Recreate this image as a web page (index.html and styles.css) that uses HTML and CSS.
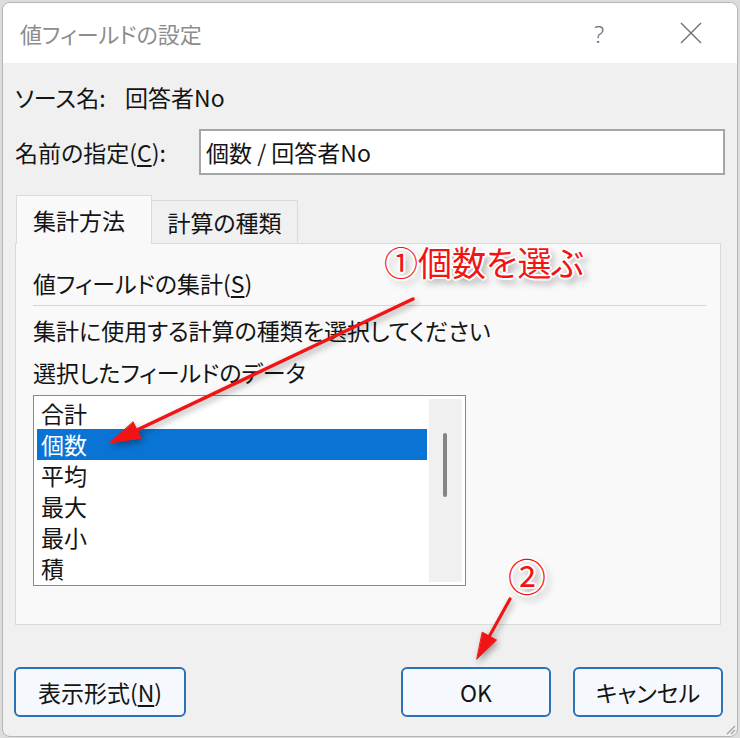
FILE: index.html
```html
<!DOCTYPE html>
<html lang="ja">
<head>
<meta charset="utf-8">
<title>値フィールドの設定</title>
<link rel="stylesheet" href="styles.css">
</head>
<body>
<div class="dialog">
  <div class="titlebar">
    <span class="title">値フィールドの設定</span>
    <span class="help">?</span>
    <span class="close"><svg width="22" height="22" viewBox="0 0 22 22"><path d="M1 1L21 21M21 1L1 21" stroke="#6f6f6f" stroke-width="1.4" fill="none"/></svg></span>
  </div>
  <div class="body">
    <div class="row source"><span class="lbl lbl-src">ソース名:</span><span>回答者No</span></div>
    <div class="row name"><span class="lbl lbl-name">名前の指定(<u>C</u>):</span><div class="input">個数 / 回答者No</div></div>
    <div class="tabs">
      <div class="tab active">集計方法</div>
      <div class="tab">計算の種類</div>
    </div>
    <div class="panel">
      <div class="group">値フィールドの集計(<u>S</u>)</div>
      <div class="sep"></div>
      <div class="desc">集計に使用する計算の種類を選択してください</div>
      <div class="desc2">選択したフィールドのデータ</div>
      <div class="list">
        <div class="items">
          <div class="item">合計</div>
          <div class="item selected">個数</div>
          <div class="item">平均</div>
          <div class="item">最大</div>
          <div class="item">最小</div>
          <div class="item">積</div>
        </div>
        <div class="scroll"><div class="thumb"></div></div>
      </div>
    </div>
    <div class="buttons">
      <button class="btn btn-fmt">表示形式(<u>N</u>)</button>
      <div class="btn-group">
        <button class="btn">OK</button>
        <button class="btn">キャンセル</button>
      </div>
    </div>
  </div>
  <svg class="grip" width="12" height="12" viewBox="0 0 12 12"><path d="M11 3L3 11M11 7L7 11" stroke="#a0a0a0" stroke-width="1.2"/></svg>
</div>
<svg class="overlay" width="740" height="738" viewBox="0 0 740 738">
  <g fill="#f21414" stroke="#f21414" stroke-linecap="round">
    <line x1="413" y1="299" x2="137" y2="430" stroke-width="3.5"/>
    <polygon points="110,443 141,438.2 133.2,422" stroke-width="1"/>
    <line x1="510" y1="599" x2="489.5" y2="636" stroke-width="3.2"/>
    <polygon points="477,659 496.5,640.1 482.5,632.3" stroke-width="1"/>
  </g>
</svg>
<div class="note note1">①個数を選ぶ</div>
<div class="note note2">②</div>
</body>
</html>
```

FILE: styles.css
```css
* { box-sizing: border-box; }
html, body { margin: 0; padding: 0; }
body {
  width: 740px;
  height: 738px;
  background: #dcdcdc;
  font-family: "Noto Sans CJK JP", "Noto Sans", sans-serif;
  font-feature-settings: "palt";
  color: #141414;
  font-size: 23px;
  position: relative;
  overflow: hidden;
}
u { text-decoration: underline; text-underline-offset: 3px; text-decoration-thickness: 1.5px; }

.dialog {
  position: relative;
  margin: 2px 0 0 2px;
  width: 736px;
  height: 735px;
  border: 1px solid #b6b6b6;
  border-radius: 8px;
  background: #f0f0f0;
  overflow: hidden;
}
.titlebar {
  height: 60px;
  background: #ffffff;
  display: flex;
  align-items: center;
  padding: 0 23px 0 17px;
}
.title { color: #8d8d8d; font-size: 22px; flex: 1; }
.help {
  width: 40px;
  text-align: center;
  color: #737373;
  font-family: "Noto Sans", sans-serif;
  font-size: 24px;
  font-weight: 300;
  margin-right: 49px;
}
.close { width: 46px; height: 22px; display: flex; justify-content: center; }

.body { padding: 0 12px 0 12px; }
.row { display: flex; align-items: center; }
.source { margin-top: 17px; height: 34px; line-height: 34px; }
.lbl-src { width: 110px; }
.name { margin-top: 15px; height: 46px; }
.lbl-name { width: 184px; }
.input {
  flex: 1;
  height: 46px;
  line-height: 42px;
  background: #ffffff;
  border: 2px solid #a6a6a6;
  padding-left: 5px;
}

.tabs { margin-top: 20px; height: 48px; display: flex; align-items: flex-end; }
.tab {
  height: 43px;
  line-height: 43px;
  width: 146px;
  text-align: center;
  background: #f0f0f0;
  border: 1px solid #dadada;
  border-left: none;
  border-bottom: none;
}
.tab.active {
  position: relative;
  z-index: 1;
  margin-left: 1px;
  width: 136px;
  height: 49px;
  line-height: 49px;
  margin-bottom: -1px;
  text-align: left;
  padding-left: 16px;
  background: #f9f9f9;
  border-left: 1px solid #dadada;
}

.panel {
  width: 706px;
  height: 382px;
  background: #f9f9f9;
  border: 1px solid #dadada;
  padding: 0 14px 0 17px;
}
.group { margin-top: 24px; line-height: 30px; }
.sep { margin-top: 7px; height: 1px; background: #d6d6d6; }
.desc { margin-top: 9px; line-height: 30px; }
.desc2 { margin-top: 12px; line-height: 30px; }

.list {
  margin-top: 8px;
  width: 433px;
  height: 191px;
  background: #ffffff;
  border: 1px solid #848a90;
  display: flex;
}
.items { width: 390px; margin-left: 3px; padding-top: 2px; }
.item { height: 31px; line-height: 31px; padding-left: 4px; }
.item.selected { background: #0a74d4; color: #ffffff; }
.scroll {
  width: 33px;
  margin: 3px 3px 3px 2px;
  background: #f0f0f0;
  position: relative;
}
.thumb {
  position: absolute;
  left: 14px;
  top: 34px;
  width: 4px;
  height: 64px;
  border-radius: 2px;
  background: #858585;
}

.buttons {
  margin-top: 42px;
  display: flex;
  justify-content: space-between;
  margin-left: -1px;
  margin-right: 2px;
}
.btn-group { display: flex; gap: 22px; }
.btn {
  font: inherit;
  font-feature-settings: "palt";
  color: #141414;
  width: 150px;
  height: 50px;
  background: #f5f9fd;
  border: 2px solid #2b72b6;
  border-radius: 6px;
  padding: 0;
}
.btn-fmt { width: 172px; }

.grip { position: absolute; right: 1px; bottom: 1px; }

.overlay {
  position: absolute;
  left: 0;
  top: 0;
  filter: drop-shadow(2px 3px 3px rgba(0,0,0,0.35));
}
.note {
  position: absolute;
  color: #f21414;
  line-height: 1;
  font-weight: 400;
  text-shadow:
    2px 0 #fff, -2px 0 #fff, 0 2px #fff, 0 -2px #fff,
    1.4px 1.4px #fff, -1.4px -1.4px #fff, 1.4px -1.4px #fff, -1.4px 1.4px #fff,
    4px 5px 7px rgba(0,0,0,0.45);
}
.note1 { left: 384px; top: 245px; font-size: 34px; }
.note2 { left: 508px; top: 556px; font-size: 38px; }
```
